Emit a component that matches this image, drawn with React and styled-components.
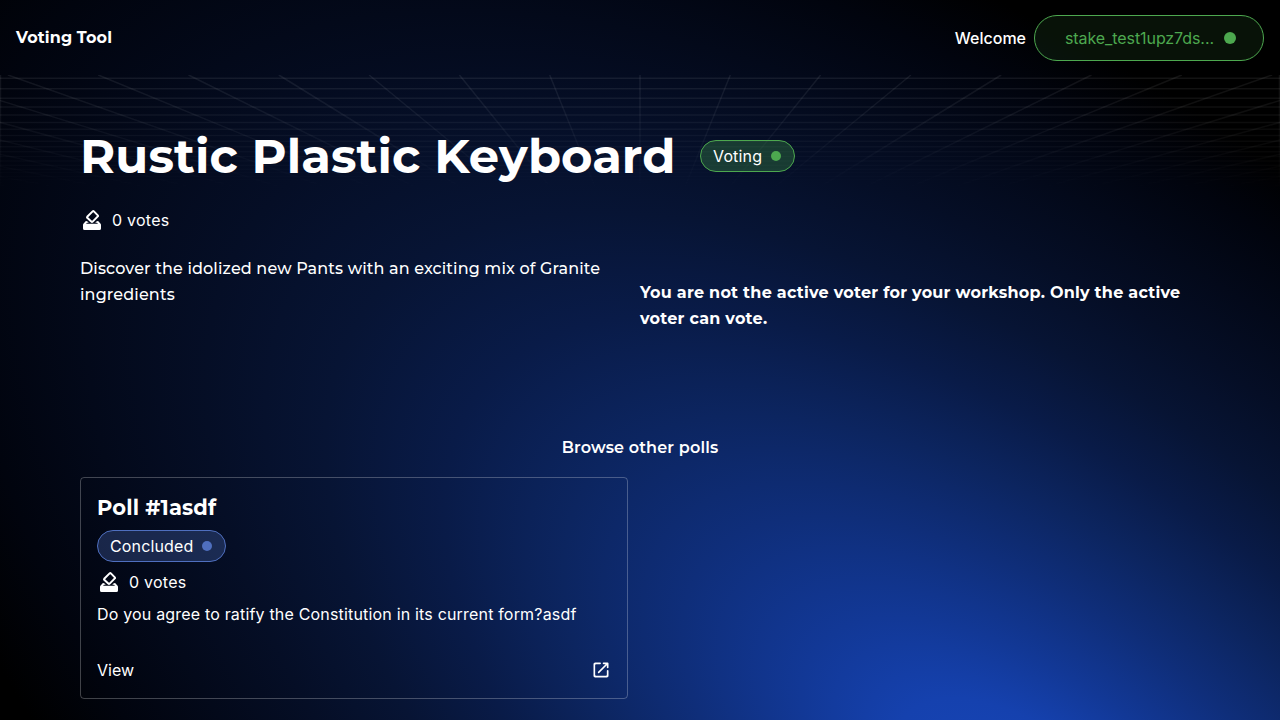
import React from "react";
import styled, { createGlobalStyle } from "styled-components";

const body = `Inter, "Liberation Sans", sans-serif`;
const display = `Montserrat, Inter, "Liberation Sans", sans-serif`;

const GlobalStyle = createGlobalStyle`
  * { box-sizing: border-box; }
  html, body, #root { height: 100%; }
  body {
    margin: 0;
    overflow: hidden;
    background: #000;
    color: #fff;
    font-family: ${body};
    font-size: 16px;
  }
  h1, h2, p { margin: 0; }
`;

const Page = styled.div`
  position: relative;
  isolation: isolate;
  width: 100%;
  height: 720px;
  overflow: hidden;
`;

const Backdrop = styled.svg`
  position: absolute;
  inset: 0;
  z-index: -1;
`;

const Header = styled.header`
  display: flex;
  align-items: center;
  justify-content: space-between;
  height: 75px;
  padding: 0 16px;
`;

const Brand = styled.div`
  font-family: ${display};
  font-weight: 700;
  font-size: 16px;
  letter-spacing: 0.1px;
  line-height: 24px;
`;

const Account = styled.div`
  display: flex;
  align-items: center;
  gap: 8px;
`;

const Welcome = styled.span`
  font-weight: 500;
`;

const WalletChip = styled.div`
  display: flex;
  align-items: center;
  gap: 10px;
  width: 230px;
  height: 46px;
  padding-left: 30px;
  border: 1px solid #4da84f;
  border-radius: 23px;
  background: rgba(76, 175, 80, 0.1);
  color: #4da84f;
  letter-spacing: -0.08px;
`;

const Dot = styled.span`
  flex: none;
  width: ${(p) => p.$size}px;
  height: ${(p) => p.$size}px;
  border-radius: 50%;
  background: ${(p) => p.$color};
`;

const Main = styled.main`
  padding: 49px 80px 0;
`;

const TitleRow = styled.div`
  display: flex;
  align-items: center;
  gap: 24px;
  height: 64px;
`;

const Title = styled.h1`
  width: 596px;
  font-family: ${display};
  font-weight: 700;
  font-size: 48px;
  line-height: 64px;
  letter-spacing: 0.08px;
  white-space: nowrap;
`;

const StatusChip = styled.div`
  display: inline-flex;
  align-items: center;
  gap: 9px;
  width: ${(p) => p.$width}px;
  height: 32px;
  padding-left: 12px;
  border: 1px solid ${(p) => p.$color};
  border-radius: 16px;
  background: ${(p) => p.$fill};
  letter-spacing: 0.15px;
`;

const Votes = styled.div`
  display: flex;
  align-items: center;
  gap: 8px;
  height: 24px;
  margin-top: ${(p) => p.$top}px;
  letter-spacing: 0.25px;
`;

const Columns = styled.div`
  display: grid;
  grid-template-columns: 1fr 1fr;
  height: 204px;
  padding-top: 24px;
  font-family: ${display};
  line-height: 26px;
`;

const Description = styled.p`
  font-weight: 500;
  letter-spacing: 0.14px;
`;

const Notice = styled.p`
  padding-top: 24px;
  font-weight: 700;
  letter-spacing: 0.24px;
`;

const SectionLabel = styled.h2`
  font-family: ${display};
  font-weight: 600;
  font-size: 16px;
  line-height: 24px;
  letter-spacing: 0.15px;
  text-align: center;
`;

const Card = styled.article`
  display: flex;
  flex-direction: column;
  align-items: flex-start;
  width: 548px;
  height: 222px;
  margin-top: 17px;
  padding: 14px 16px 16px;
  border: 1px solid rgba(255, 255, 255, 0.25);
  border-radius: 4px;
`;

const CardTitle = styled.h2`
  font-family: ${display};
  font-weight: 700;
  font-size: 21px;
  line-height: 32px;
  letter-spacing: 0.15px;
  margin-bottom: 6px;
`;

const Question = styled.p`
  margin-top: 8px;
  line-height: 24px;
  letter-spacing: 0.18px;
`;

const CardFooter = styled.div`
  display: flex;
  align-items: center;
  justify-content: space-between;
  width: 100%;
  margin-top: auto;
  line-height: 24px;
`;

const Icon = styled.svg`
  flex: none;
  width: ${(p) => p.$size}px;
  height: ${(p) => p.$size}px;
  fill: currentColor;
`;

function BallotIcon() {
  return (
    <Icon $size={24} viewBox="0 0 24 24" aria-hidden="true">
      <path d="M5.9 13.1L7.2 13.2 8.8 14.8H7L6 15.8H18L17 14.8H15.2L16.8 13.2 18.1 13.1 20.4 15.4Q21 16 21 16.8V20.4A1.6 1.6 0 0 1 19.4 22H4.6A1.6 1.6 0 0 1 3 20.4V16.8Q3 16 3.6 15.4Z" />
      <path
        d="M12.6 3.4L7.2 8.8Q6.8 9.3 7.2 9.8L11.3 13.6Q12 14.2 12.7 13.6L17.8 8.4Q18.3 7.9 17.8 7.4L13.9 3.4Q13.3 2.8 12.6 3.4Z"
        fill="none"
        stroke="currentColor"
        strokeWidth="2"
        strokeLinejoin="round"
      />
    </Icon>
  );
}

function LaunchIcon() {
  return (
    <Icon $size={20} viewBox="0 0 24 24" aria-hidden="true">
      <path d="M18 19H6c-.55 0-1-.45-1-1V6c0-.55.45-1 1-1h5c.55 0 1-.45 1-1s-.45-1-1-1H5c-1.11 0-2 .9-2 2v14c0 1.1.9 2 2 2h14c1.1 0 2-.9 2-2v-6c0-.55-.45-1-1-1s-1 .45-1 1v5c0 .55-.45 1-1 1zM14 4c0 .55.45 1 1 1h2.59l-9.13 9.13c-.39.39-.39 1.02 0 1.41.39.39 1.02.39 1.41 0L19 6.41V9c0 .55.45 1 1 1s1-.45 1-1V4c0-.55-.45-1-1-1h-5c-.55 0-1 .45-1 1z" />
    </Icon>
  );
}

const VANISH_X = 640;
const VANISH_Y = 298;
const rays = Array.from({ length: 31 }, (_, i) => i - 15);
const rungs = Array.from({ length: 20 }, (_, k) => VANISH_Y - 1 / (0.00454 + 0.000228 * k));

function PerspectiveBackdrop() {
  return (
    <Backdrop width="1280" height="720" viewBox="0 0 1280 720" aria-hidden="true">
      <defs>
        <radialGradient
          id="glow"
          gradientUnits="userSpaceOnUse"
          cx="0"
          cy="0"
          r="1"
          gradientTransform="translate(1040 820) rotate(37.5) scale(1410 675)"
        >
          <stop offset="0" stopColor="#1848bc" />
          <stop offset="0.12" stopColor="#1541ae" />
          <stop offset="0.2" stopColor="#123896" />
          <stop offset="0.3" stopColor="#0f2e7a" />
          <stop offset="0.4" stopColor="#0c2560" />
          <stop offset="0.5" stopColor="#091b48" />
          <stop offset="0.6" stopColor="#071434" />
          <stop offset="0.7" stopColor="#050e26" />
          <stop offset="0.8" stopColor="#03091a" />
          <stop offset="0.9" stopColor="#01040e" />
          <stop offset="1" stopColor="#000000" />
        </radialGradient>
        <linearGradient id="fade" x1="0" y1="75" x2="0" y2="190" gradientUnits="userSpaceOnUse">
          <stop offset="0" stopColor="#fff" />
          <stop offset="0.3" stopColor="#fff" stopOpacity="0.8" />
          <stop offset="1" stopColor="#fff" stopOpacity="0" />
        </linearGradient>
        <mask id="gridMask" maskUnits="userSpaceOnUse" x="0" y="75" width="1280" height="115">
          <rect y="75" width="1280" height="115" fill="url(#fade)" />
        </mask>
      </defs>
      <rect width="1280" height="720" fill="url(#glow)" />
      <g mask="url(#gridMask)" stroke="#fff" strokeOpacity="0.075" strokeWidth="1.5">
        {rays.map((n) => (
          <line key={n} x1={VANISH_X + n * 90.3} y1="75" x2={VANISH_X + (n * 90.3 * 108) / 223} y2="190" />
        ))}
        {rungs.map((y) => (
          <line key={y} x1="0" y1={y + 0.5} x2="1280" y2={y + 0.5} />
        ))}
        <path d="M.5 75V190M1279.5 75V190" />
      </g>
    </Backdrop>
  );
}

export default function App() {
  return (
    <Page>
      <GlobalStyle />
      <PerspectiveBackdrop />
      <Header>
        <Brand>Voting Tool</Brand>
        <Account>
          <Welcome>Welcome</Welcome>
          <WalletChip>
            stake_test1upz7ds...
            <Dot $size={12} $color="#4da84f" />
          </WalletChip>
        </Account>
      </Header>
      <Main>
        <TitleRow>
          <Title>Rustic Plastic Keyboard</Title>
          <StatusChip $width={95} $color="#4da84f" $fill="rgba(76, 175, 80, 0.28)">
            Voting
            <Dot $size={10} $color="#4da84f" />
          </StatusChip>
        </TitleRow>
        <Votes $top={20}>
          <BallotIcon />0 votes
        </Votes>
        <Columns>
          <Description>
            Discover the idolized new Pants with an exciting mix of Granite ingredients
          </Description>
          <Notice>
            You are not the active voter for your workshop. Only the active voter can vote.
          </Notice>
        </Columns>
        <SectionLabel>Browse other polls</SectionLabel>
        <Card>
          <CardTitle>Poll #1asdf</CardTitle>
          <StatusChip $width={129} $color="#4f6fbf" $fill="rgba(79, 111, 191, 0.3)">
            Concluded
            <Dot $size={10} $color="#4f6fbf" />
          </StatusChip>
          <Votes $top={8}>
            <BallotIcon />0 votes
          </Votes>
          <Question>Do you agree to ratify the Constitution in its current form?asdf</Question>
          <CardFooter>
            View
            <LaunchIcon />
          </CardFooter>
        </Card>
      </Main>
    </Page>
  );
}
